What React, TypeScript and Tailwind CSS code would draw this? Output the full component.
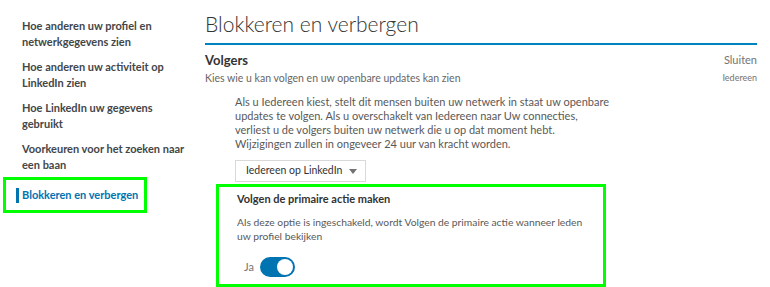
import React from 'react';

const navItems = [
  'Hoe anderen uw profiel en netwerkgegevens zien',
  'Hoe anderen uw activiteit op LinkedIn zien',
  'Hoe LinkedIn uw gegevens gebruikt',
  'Voorkeuren voor het zoeken naar een baan',
];

const App: React.FC = () => {
  return (
    <div className="w-[770px] h-[287px] overflow-hidden bg-white flex font-['Lato',sans-serif] text-[#434649]">
      {/* sidebar */}
      <aside className="w-[205px] shrink-0 pt-[18px]">
        <ul className="flex flex-col gap-[9px]">
          {navItems.map((item) => (
            <li key={item} className="ml-[22px] w-[165px] text-[11px] leading-[16px] font-bold">
              {item}
            </li>
          ))}
        </ul>
        <div className="ml-[3px] mt-[4px] w-[144px] h-[36px] border-[3px] border-[#00ff00] flex items-center pl-[10px] gap-[3px]">
          <span className="w-[3px] h-[15px] bg-[#0073b1]" />
          <span className="text-[11px] font-bold text-[#0073b1]">Blokkeren en verbergen</span>
        </div>
      </aside>

      {/* main */}
      <main className="flex-1 pr-[13px]">
        <h1 className="pt-[9px] text-[21px] leading-[30px] font-light text-[#333333] pb-[4px] border-b-2 border-[#0084bf]">
          Blokkeren en verbergen
        </h1>

        <div className="flex justify-between items-center mt-[6px]">
          <h2 className="text-[13px] leading-[18px] font-bold text-[#333333]">Volgers</h2>
          <span className="text-[11px] text-[#737373]">Sluiten</span>
        </div>
        <div className="flex justify-between items-center mt-[1px]">
          <p className="text-[10.5px] leading-[16px] text-[#666666]">
            Kies wie u kan volgen en uw openbare updates kan zien
          </p>
          <span className="text-[9px] text-[#737373]">Iedereen</span>
        </div>

        <div className="ml-[30px] mt-[9px]">
          <p className="w-[378px] text-[11px] leading-[14px] text-[#595959]">
            Als u Iedereen kiest, stelt dit mensen buiten uw netwerk in staat uw openbare updates te volgen.
            Als u overschakelt van Iedereen naar Uw connecties, verliest u de volgers buiten uw netwerk die u
            op dat moment hebt. Wijzigingen zullen in ongeveer 24 uur van kracht worden.
          </p>

          <div className="mt-[9px] w-[131px] h-[22px] border border-[#d9d9d9] flex items-center pl-[10px]">
            <span className="text-[10.5px] text-[#333333]">Iedereen op LinkedIn</span>
            <span className="ml-auto mr-[8px] block w-0 h-0 border-l-[4px] border-r-[4px] border-t-[5px] border-l-transparent border-r-transparent border-t-[#737373]" />
          </div>
        </div>

        <section className="ml-[11px] mt-[2px] w-[390px] h-[103px] border-[3px] border-[#00ff00] pl-[18px] pt-[4px]">
          <h3 className="text-[11px] leading-[16px] font-bold text-[#333333]">Volgen de primaire actie maken</h3>
          <p className="mt-[8px] w-[358px] text-[10.3px] leading-[14px] text-[#595959]">
            Als deze optie is ingeschakeld, wordt Volgen de primaire actie wanneer leden uw profiel bekijken
          </p>
          <div className="mt-[14px] ml-[7px] flex items-center gap-[6px]">
            <span className="text-[11px] text-[#737373]">Ja</span>
            <span className="relative w-[35px] h-[20px] rounded-full bg-[#0073b1]">
              <span className="absolute right-[2px] top-[2px] w-[16px] h-[16px] rounded-full bg-white" />
            </span>
          </div>
        </section>
      </main>
    </div>
  );
};

export default App;
